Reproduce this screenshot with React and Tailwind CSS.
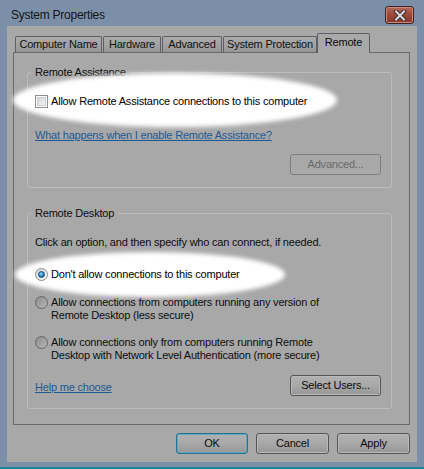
import React from 'react';

const Tab = ({ label, w, sel }) =>
  sel ? (
    <div className={`relative z-10 -mb-px h-[20px] ${w} border border-b-0 border-[#5c6066] bg-[#a8a8a8] rounded-t-[2px] flex justify-center pt-[2px] leading-[13px] text-[#0a0a0a]`}>
      {label}
    </div>
  ) : (
    <div className={`h-[16px] ${w} border border-b-0 border-[#5c6066] rounded-t-[2px] bg-gradient-to-b from-[#ababab] via-[#a3a3a3] to-[#969696] flex items-center justify-center leading-[13px] text-[#101010]`}>
      {label}
    </div>
  );

const Button = ({ children, w, primary, disabled }) => {
  if (disabled) {
    return (
      <div className={`${w} h-[21px] rounded-[3px] border border-[#7b7e80] bg-[#a9a9a9] flex items-center justify-center text-[#6a6a6a]`}>
        {children}
      </div>
    );
  }
  return (
    <div
      className={`${w} h-[21px] rounded-[3px] border ${
        primary ? 'border-[#2b6f8d] shadow-[inset_0_0_0_1px_#5aa9c4]' : 'border-[#555555] shadow-[inset_0_0_0_1px_#b9b9b9]'
      } bg-gradient-to-b from-[#b1b1b1] via-[#a8a8a8] to-[#979797] flex items-center justify-center text-[#0c0c0c]`}
    >
      {children}
    </div>
  );
};

const Checkbox = () => (
  <span className="relative shrink-0 w-[13px] h-[13px] border border-[#8e8f8f] bg-white p-px">
    <span className="block w-full h-full border border-[#c9ccd1] bg-gradient-to-br from-[#d3d6da] to-[#f3f3f3]" />
  </span>
);

const Radio = ({ checked, lit }) => (
  <span
    className={`relative shrink-0 w-[13px] h-[13px] rounded-full border flex items-center justify-center ${
      lit ? 'border-[#8a8b8c] bg-gradient-to-br from-[#d2d4d7] to-[#fafafa]' : 'border-[#666666] bg-gradient-to-br from-[#8c8c8c] to-[#b6b6b6]'
    }`}
  >
    {checked && (
      <span className="w-[7px] h-[7px] rounded-full border border-[#164b74] bg-[radial-gradient(circle_at_40%_35%,#a8e0ff_0%,#2f93d3_45%,#0c4a80_100%)]" />
    )}
  </span>
);

const Group = ({ title, className, children }) => (
  <fieldset className={`border border-[#bcbcbc] rounded-[3px] pl-[7px] pr-[10px] ${className}`}>
    <legend className="ml-[-4px] px-[4px] leading-[14px] text-[#0e0e0e]">{title}</legend>
    {children}
  </fieldset>
);

export default function App() {
  return (
    <div className="w-[424px] h-[469px] bg-[#7b90a8] flex flex-col font-['Liberation_Sans',Arial,sans-serif] text-[11px] tracking-[-0.2px] overflow-hidden">
      {/* title bar */}
      <div className="h-[26px] flex items-start shrink-0">
        <span className="ml-[11px] mt-[8px] text-[12px] leading-[14px] tracking-[-0.25px] text-[#121417]">System Properties</span>
        <div className="ml-auto mr-[10px] mt-[6px] w-[29px] h-[18px] rounded-[3px] border border-[#3b2422] bg-gradient-to-b from-[#b86a5c] via-[#9c4636] to-[#8a3a2c] shadow-[inset_0_0_0_1px_#c98a7e] flex items-center justify-center">
          <svg width="14" height="11" viewBox="0 0 14 11">
            <path d="M3 1.5 L11 9.5 M11 1.5 L3 9.5" stroke="#3a2a28" strokeWidth="4" strokeLinecap="square" />
            <path d="M3 1.5 L11 9.5 M11 1.5 L3 9.5" stroke="#dcdcdc" strokeWidth="2" strokeLinecap="square" />
          </svg>
        </div>
      </div>

      {/* client */}
      <div className="mx-[7px] h-[436px] shrink-0 bg-[#a8a8a8] flex flex-col pt-[7px]">
        <div className="flex items-end h-[19px] ml-[8px]">
          <Tab label="Computer Name" w="w-[87px]" />
          <div className="w-px" />
          <Tab label="Hardware" w="w-[58px]" />
          <div className="w-px" />
          <Tab label="Advanced" w="w-[60px]" />
          <div className="w-px" />
          <Tab label="System Protection" w="w-[94px]" />
          <Tab label="Remote" w="w-[53px]" sel />
        </div>

        <div className="ml-[6px] w-[397px] h-[373px] border border-[#6a6a6a] pt-[12px] pl-[13px] pr-[17px] pb-[16px] text-[#0e0e0e]">
          <Group title="Remote Assistance" className="pb-[12px]">
            <div className="relative mt-[15px] flex items-center h-[14px]">
              <span className="absolute left-[-22px] top-[-21px] w-[324px] h-[54px] rounded-[50%] bg-white blur-[2px]" />
              <Checkbox />
              <span className="relative ml-[3px] leading-[14px] text-black">Allow Remote Assistance connections to this computer</span>
            </div>
            <div className="mt-[20px] h-[14px] leading-[14px]">
              <span className="text-[#1c5a96] underline">What happens when I enable Remote Assistance?</span>
            </div>
            <div className="mt-[12px] flex justify-end">
              <Button w="w-[91px]" disabled>Advanced...</Button>
            </div>
          </Group>

          <Group title="Remote Desktop" className="mt-[18px] pb-[12px]">
            <div className="mt-[15px] h-[14px] leading-[14px]">Click an option, and then specify who can connect, if needed.</div>
            <div className="relative mt-[18px] flex items-center h-[14px]">
              <span className="absolute left-[-20px] top-[-15px] w-[270px] h-[45px] rounded-[50%] bg-white blur-[2px]" />
              <Radio checked lit />
              <span className="relative ml-[3px] leading-[14px] text-black">Don't allow connections to this computer</span>
            </div>
            <div className="mt-[15px] flex items-start">
              <Radio />
              <span className="ml-[3px] leading-[13px]">
                Allow connections from computers running any version of
                <br />
                Remote Desktop (less secure)
              </span>
            </div>
            <div className="mt-[14px] flex items-start">
              <Radio />
              <span className="ml-[3px] leading-[13px]">
                Allow connections only from computers running Remote
                <br />
                Desktop with Network Level Authentication (more secure)
              </span>
            </div>
            <div className="mt-[13px] flex items-start justify-between">
              <span className="mt-[5px] leading-[14px] text-[#1c5a96] underline">Help me choose</span>
              <Button w="w-[91px]">Select Users...</Button>
            </div>
          </Group>
        </div>

        <div className="mt-[8px] mr-[7px] flex justify-end gap-[8px]">
          <Button w="w-[72px]" primary>OK</Button>
          <Button w="w-[73px]">Cancel</Button>
          <Button w="w-[73px]">Apply</Button>
        </div>
      </div>

      <div className="h-[5px] shrink-0" />
      <div className="h-[2px] shrink-0 bg-[#15899a]" />
    </div>
  );
}
